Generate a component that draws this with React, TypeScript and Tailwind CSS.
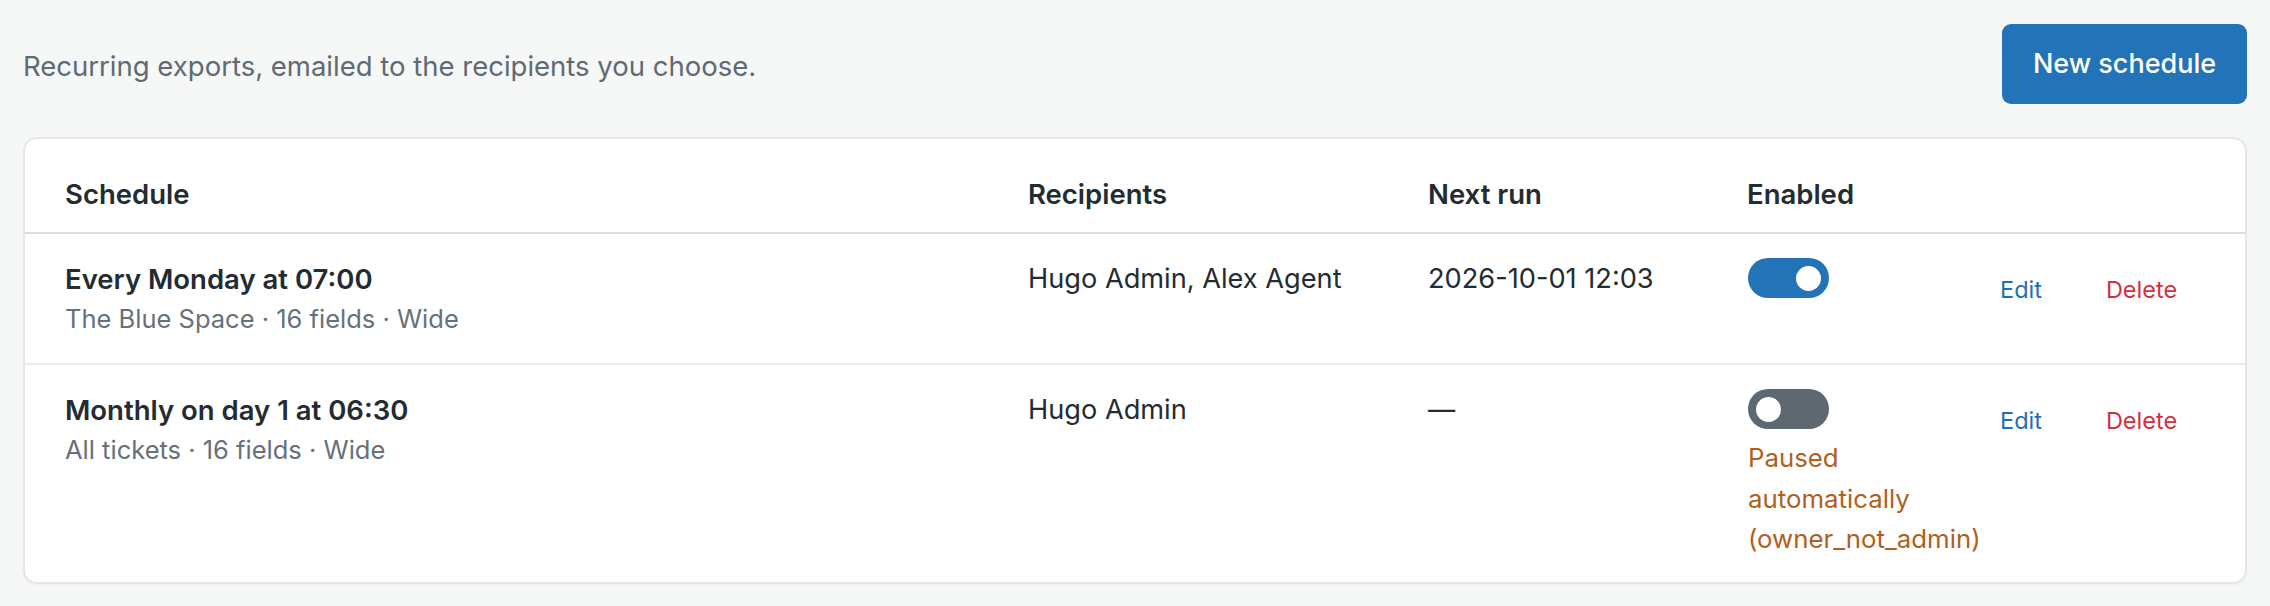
import React from "react";

type Row = {
  title: string;
  meta: string;
  recipients: string;
  nextRun: string;
  enabled: boolean;
  note?: string[];
};

const rows: Row[] = [
  {
    title: "Every Monday at 07:00",
    meta: "The Blue Space · 16 fields · Wide",
    recipients: "Hugo Admin, Alex Agent",
    nextRun: "2026-10-01 12:03",
    enabled: true,
  },
  {
    title: "Monthly on day 1 at 06:30",
    meta: "All tickets · 16 fields · Wide",
    recipients: "Hugo Admin",
    nextRun: "—",
    enabled: false,
    note: ["Paused", "automatically", "(owner_not_admin)"],
  },
];

const cols = "grid grid-cols-[964px_400px_320px_251px_1fr]";

function Toggle({ on }: { on: boolean }) {
  return (
    <div
      className={`flex h-[40px] w-[81px] items-center rounded-full px-[8px] ${
        on ? "justify-end bg-[#2273b7]" : "justify-start bg-[#5d6870]"
      }`}
    >
      <div className="h-[25px] w-[25px] rounded-full bg-white" />
    </div>
  );
}

export default function App() {
  return (
    <div className="min-h-screen bg-[#f6f7f7] px-[23px] pt-[24px] pb-[23px] font-['Inter',sans-serif] text-[#232b33]">
      <div className="flex items-center justify-between">
        <p className="pt-[4px] text-[27.5px] leading-[40px] text-[#5f6a75]">
          Recurring exports, emailed to the recipients you choose.
        </p>
        <button
          type="button"
          className="h-[80px] w-[245px] rounded-[9px] bg-[#2273b7] text-[27px] font-medium text-white"
        >
          New schedule
        </button>
      </div>

      <div className="mt-[33px] overflow-hidden rounded-[14px] border-2 border-[#e4e7e9] bg-white shadow-[0_2px_3px_rgba(0,0,0,0.03)]">
        <div
          className={`${cols} border-b-2 border-[#d8dde1] pt-[34px] pb-[17px] text-[27.5px] font-semibold leading-[42px]`}
        >
          <div className="pl-[40px]">Schedule</div>
          <div className="pl-[39px]">Recipients</div>
          <div className="pl-[39px]">Next run</div>
          <div className="pl-[38px]">Enabled</div>
          <div />
        </div>

        {rows.map((row, i) => (
          <div
            key={row.title}
            className={`${cols} items-start ${
              i < rows.length - 1 ? "border-b-2 border-[#e8eaec] pb-[25px]" : "pb-[22px]"
            } pt-[24px]`}
          >
            <div className="pl-[40px]">
              <div className="text-[27.5px] font-semibold leading-[42px]">{row.title}</div>
              <div className="text-[25.5px] leading-[38px] text-[#66717c]">{row.meta}</div>
            </div>
            <div className="pl-[39px] text-[27.2px] leading-[42px]">{row.recipients}</div>
            <div className="pl-[39px] text-[27.2px] leading-[42px]">{row.nextRun}</div>
            <div className="pl-[39px]">
              <Toggle on={row.enabled} />
              {row.note && (
                <div className="mt-[9px] text-[25.8px] leading-[40.5px] text-[#b0601c]">
                  {row.note.map((line) => (
                    <div key={line}>{line}</div>
                  ))}
                </div>
              )}
            </div>
            <div className="flex items-start gap-[64px] pt-[17px] pl-[40px] text-[23.5px] leading-[30px]">
              <button type="button" className="text-[#1f6fb4]">
                Edit
              </button>
              <button type="button" className="text-[#d1303f]">
                Delete
              </button>
            </div>
          </div>
        ))}
      </div>
    </div>
  );
}
